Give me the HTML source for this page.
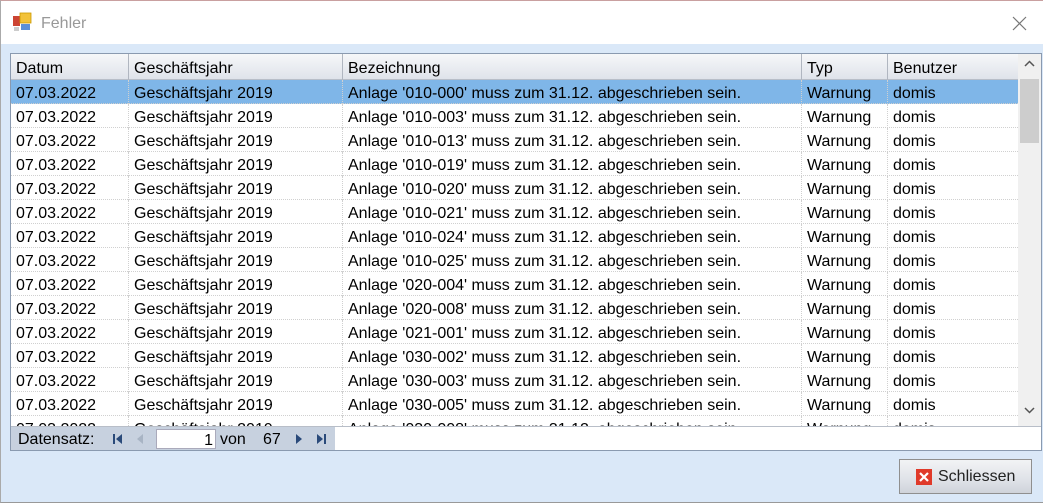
<!DOCTYPE html>
<html><head><meta charset="utf-8"><style>
*{margin:0;padding:0;box-sizing:border-box}
body{width:1043px;height:503px;overflow:hidden;background:#fff;font-family:"Liberation Sans",Arial,sans-serif;font-size:16px;color:#000;position:relative}
.title{position:absolute;left:0;top:0;width:1043px;height:44px;background:#fff;border-left:1px solid #aaa;border-top:1px solid #c9a0a0}
.title .t{position:absolute;left:40px;top:14px;color:#999;font-size:16px}
.body{position:absolute;left:0;top:44px;width:1043px;height:459px;background:#dae8f8;border-left:1px solid #aaa;border-bottom:1px solid #999}
.grid{position:absolute;left:10px;top:53px;width:1032px;height:398px;border:1px solid #8a9ab0;background:#fff;overflow:hidden}
.hdr{position:absolute;left:0;top:0;height:26px;width:1008px;background:linear-gradient(#f6f7f9,#dfe3ea);border-bottom:1px solid #b8bec8}
.hdr div{position:absolute;top:0;height:26px;line-height:30px;padding-left:5px;border-left:1px solid #b0b6c0}
.row{position:absolute;left:0;width:1007px;height:24px;border-bottom:1px dotted #d0d0d0}
.row div{position:absolute;top:0;height:24px;line-height:27px;padding-left:5px;border-left:1px dotted #d0d0d0;white-space:nowrap}
.sel{background:#7fb6e8}
.sb{position:absolute;left:1007px;top:0;width:23px;height:372px;background:#f0f0f0}
.thumb{position:absolute;left:2px;top:25px;width:19px;height:64px;background:#cdcdcd}
.nav{position:absolute;left:0;top:372px;width:1030px;height:24px;background:#fff;border-top:1px solid #b8bec8}
.navl{position:absolute;left:0;top:0;width:324px;height:24px;background:#c7d1df}
.btn{position:absolute;left:899px;top:459px;width:133px;height:35px;border:1px solid #8f8f8f;background:linear-gradient(#f2f3f5,#dfe2e8 60%,#cfd3da);}
</style></head><body>
<div class="title">
<svg style="position:absolute;left:12px;top:11px" width="20" height="20" viewBox="0 0 20 20"><rect x="0" y="4" width="7" height="10" fill="#c43"/><rect x="7" y="1" width="11" height="10" fill="#f2c23a" stroke="#c90" stroke-width=".8"/><rect x="8" y="12" width="9" height="6" fill="#5b8fd8"/><rect x="1" y="15" width="5" height="4" fill="#ccc"/></svg>
<div class="t">Fehler</div>
<svg style="position:absolute;left:1011px;top:15px" width="15" height="15"><path d="M1 1L14 14M14 1L1 14" stroke="#777" stroke-width="1.2"/></svg>
</div>
<div class="body"></div>
<div class="grid">
<div class="hdr">
<div style="left:0;width:117px;border-left:none">Datum</div>
<div style="left:117px;width:214px">Geschäftsjahr</div>
<div style="left:331px;width:459px">Bezeichnung</div>
<div style="left:790px;width:86px">Typ</div>
<div style="left:876px;width:132px">Benutzer</div>
</div>
<div id="rows"></div>
<div class="sb"><svg style="position:absolute;left:6px;top:6px" width="11" height="8"><path d="M1 6L5.5 1.5L10 6" stroke="#555" stroke-width="1.5" fill="none"/></svg><div class="thumb"></div><svg style="position:absolute;left:6px;top:352px" width="11" height="8"><path d="M1 2L5.5 6.5L10 2" stroke="#555" stroke-width="1.5" fill="none"/></svg></div>
<div class="nav"><div class="navl">
<span style="position:absolute;left:7px;top:4px">Datensatz:</span>
<svg style="position:absolute;left:102px;top:7px" width="10" height="10"><rect x="0" y="0" width="2" height="10" fill="#2a4a7a"/><path d="M9 0L3 5L9 10Z" fill="#2a4a7a"/></svg>
<svg style="position:absolute;left:126px;top:7px" width="8" height="10"><path d="M6 0L0 5L6 10Z" fill="#a8b4c4"/></svg>
<div style="position:absolute;left:145px;top:2px;width:60px;height:20px;background:#fff;border:1px solid #aab;text-align:right;padding-right:2px;line-height:21px">1</div>
<span style="position:absolute;left:209px;top:4px">von</span>
<span style="position:absolute;left:252px;top:4px">67</span>
<svg style="position:absolute;left:285px;top:7px" width="8" height="10"><path d="M0 0L6 5L0 10Z" fill="#2a4a7a"/></svg>
<svg style="position:absolute;left:306px;top:7px" width="10" height="10"><path d="M0 0L6 5L0 10Z" fill="#2a4a7a"/><rect x="7" y="0" width="2" height="10" fill="#2a4a7a"/></svg>
</div></div>
</div>
<div class="btn">
<svg style="position:absolute;left:16px;top:9px" width="16" height="16"><rect x="0" y="0" width="16" height="16" fill="#e03a2a"/><path d="M4 4L12 12M12 4L4 12" stroke="#fff" stroke-width="2.2"/></svg>
<span style="position:absolute;left:38px;top:8px;color:#222">Schliessen</span>
</div>
<script>
var c=["010-000","010-003","010-013","010-019","010-020","010-021","010-024","010-025","020-004","020-008","021-001","030-002","030-003","030-005","030-008"];
var h="";
for(var i=0;i<c.length;i++){h+='<div class="row'+(i==0?' sel':'')+'" style="top:'+(26+i*24)+'px"><div style="left:0;width:117px;border-left:none">07.03.2022</div><div style="left:117px;width:214px">Geschäftsjahr 2019</div><div style="left:331px;width:459px">Anlage \''+c[i]+'\' muss zum 31.12. abgeschrieben sein.</div><div style="left:790px;width:86px">Warnung</div><div style="left:876px;width:131px">domis</div></div>';}
document.getElementById("rows").innerHTML=h;
</script>
</body></html>
